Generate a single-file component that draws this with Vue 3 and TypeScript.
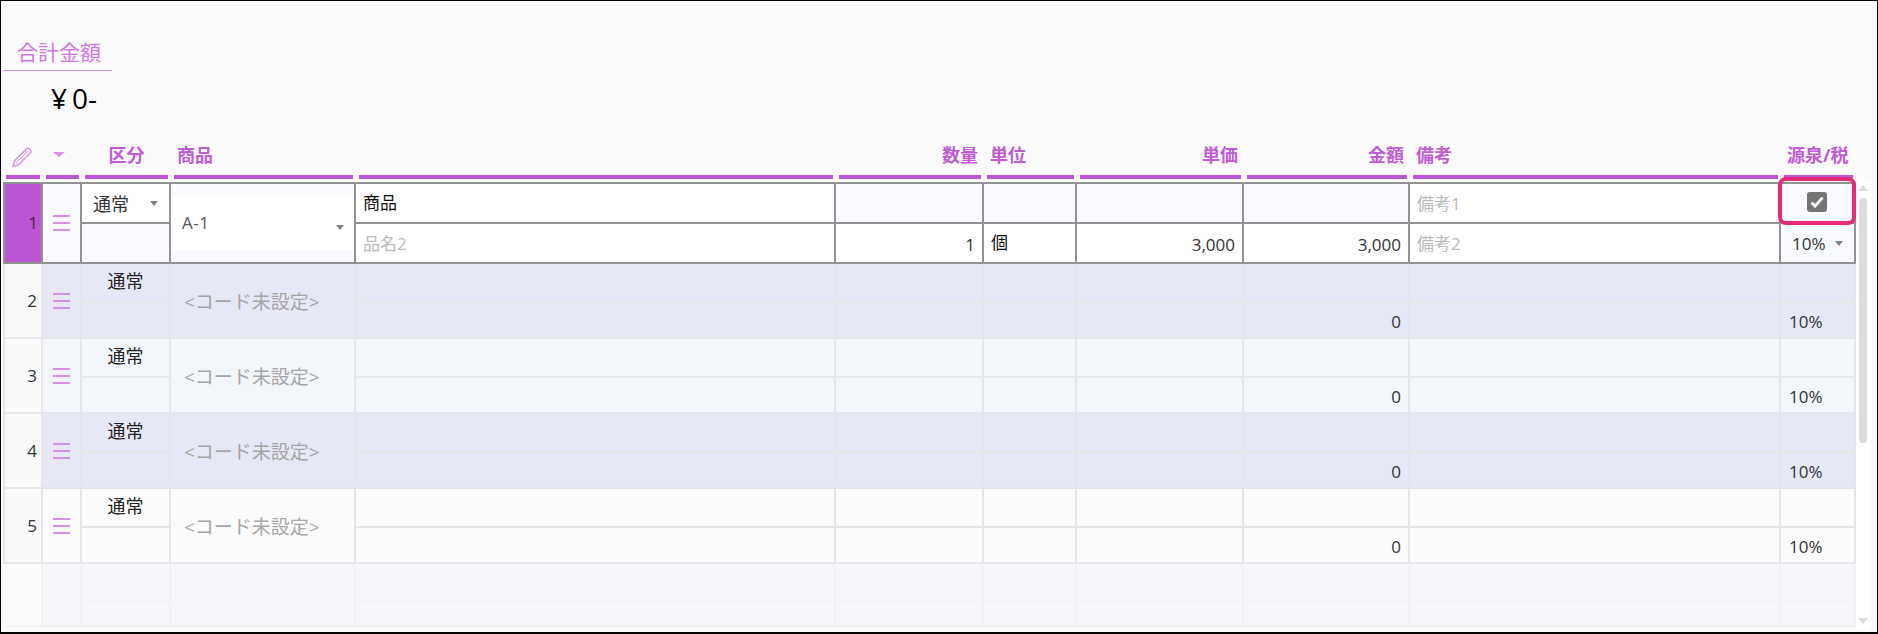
<script setup lang="ts">
const rows: { n: number; tone: string }[] = [
  { n: 2, tone: 'tone-a' },
  { n: 3, tone: 'tone-b' },
  { n: 4, tone: 'tone-a' },
  { n: 5, tone: 'tone-c' },
]
</script>

<template>
  <div class="page">
    <section class="total">
      <div class="total-label">合計金額</div>
      <div class="total-value"><span class="yen">¥</span>0-</div>
    </section>

    <div class="head grid-cols">
      <div class="hc tool">
        <svg class="pencil" viewBox="0 0 22 22" width="22" height="22" fill="none" stroke="#da9ce6" stroke-width="1.5" stroke-linejoin="round">
          <path d="M2 20.5l1.6-6L15.6 2.6a1.6 1.6 0 0 1 2.3 0l1.7 1.7a1.6 1.6 0 0 1 0 2.3L7.6 18.7z" />
          <path d="M3.6 14.5l4 4M13.6 4.6l4 4M5.4 13l9.7-9.7M7.2 14.8l9.7-9.7" stroke-width="1" />
        </svg>
      </div>
      <div class="hc tool"><span class="caret head-caret"></span></div>
      <div class="hc center">区分</div>
      <div class="hc">商品</div>
      <div class="hc"></div>
      <div class="hc right">数量</div>
      <div class="hc">単位</div>
      <div class="hc right">単価</div>
      <div class="hc right">金額</div>
      <div class="hc">備考</div>
      <div class="hc">源泉/税</div>
    </div>

    <div class="body">
      <div class="sheet">
        <div class="row grid-cols first">
          <div class="c num sel-num span">1</div>
          <div class="c handle pale span"><span class="bars"><i></i><i></i><i></i></span></div>
          <div class="c white select">通常<span class="caret"></span></div>
          <div class="c code-sel span"><span>A-1</span><span class="caret"></span></div>
          <div class="c white strong">商品</div>
          <div class="c pale"></div>
          <div class="c pale"></div>
          <div class="c pale"></div>
          <div class="c pale"></div>
          <div class="c white ph">備考1</div>
          <div class="c pale check"><span class="checkbox">
            <svg viewBox="0 0 20 20" width="20" height="20" fill="none" stroke="#fff" stroke-width="2.8"><path d="M4.5 10.5l3.6 3.6L15.5 5.6" /></svg>
          </span></div>

          <div class="c pale"></div>
          <div class="c white ph">品名2</div>
          <div class="c white end">1</div>
          <div class="c white strong">個</div>
          <div class="c white end">3,000</div>
          <div class="c white end">3,000</div>
          <div class="c white ph">備考2</div>
          <div class="c pale tax-sel">10%<span class="caret"></span></div>
        </div>

        <div v-for="r in rows" :key="r.n" class="row grid-cols plain" :class="r.tone">
          <div class="c num span">{{ r.n }}</div>
          <div class="c handle span"><span class="bars"><i></i><i></i><i></i></span></div>
          <div class="c middle">通常</div>
          <div class="c code span">&lt;コード未設定&gt;</div>
          <div class="c"></div>
          <div class="c"></div>
          <div class="c"></div>
          <div class="c"></div>
          <div class="c"></div>
          <div class="c"></div>
          <div class="c"></div>

          <div class="c"></div>
          <div class="c"></div>
          <div class="c"></div>
          <div class="c"></div>
          <div class="c"></div>
          <div class="c end">0</div>
          <div class="c"></div>
          <div class="c tax">10%</div>
        </div>

        <div class="row grid-cols ghost">
          <div class="c num span"></div>
          <div class="c span"></div>
          <div class="c"></div>
          <div class="c span"></div>
          <div class="c"></div><div class="c"></div><div class="c"></div><div class="c"></div><div class="c"></div><div class="c"></div><div class="c"></div>
          <div class="c"></div><div class="c"></div><div class="c"></div><div class="c"></div><div class="c"></div><div class="c"></div><div class="c"></div><div class="c"></div>
        </div>

        <div class="highlight"></div>
      </div>

      <div class="scroll">
        <span class="arrow up"></span>
        <span class="thumb"></span>
        <span class="spacer"></span>
        <span class="arrow down"></span>
      </div>
    </div>
  </div>
</template>

<style>
html, body { margin: 0; background: #fff; }
</style>

<style scoped>
.page {
  box-sizing: border-box;
  width: 1878px;
  height: 634px;
  border: 1px solid #000;
  border-width: 1px 1px 2px 1px;
  background: #fbfbfc;
  padding: 38px 0 0 2px;
  font-family: "Open Sans", "Noto Sans CJK JP", sans-serif;
  font-size: 17px;
  color: #333;
  overflow: hidden;
}

.total { width: 109px; height: 105px; }
.total-label {
  height: 32px;
  box-sizing: border-box;
  border-bottom: 1px solid #d78ce6;
  padding-left: 14px;
  font-size: 21px;
  line-height: 27px;
  color: #cf78e0;
}
.total-value {
  padding: 7px 0 0 48px;
  font-size: 28px;
  line-height: 40px;
  color: #000;
  white-space: nowrap;
}
.yen { margin-right: 5px; }

.grid-cols {
  display: grid;
  grid-template-columns: 40px 39px 89px 185px 480px 148px 93px 167px 166px 371px 75px;
}

.head { height: 38px; }
.hc {
  box-sizing: border-box;
  margin: 0 3px;
  padding: 0 3px;
  border-bottom: 4px solid #bc55d3;
  color: #c05cd6;
  font-size: 18px;
  font-weight: 700;
  line-height: 22px;
  white-space: nowrap;
  height: 35px;
}
.hc.tool { padding: 2px 0 0; display: flex; align-items: flex-start; justify-content: center; }
.hc.center { text-align: center; }
.hc.right { text-align: right; }
.pencil { margin: 0 0 0 -3px; }
.head-caret.caret {
  position: static;
  border-top-color: #d993e6;
  border-width: 5px 6px 0;
  margin: 6px 0 0 -7px;
}

.body { display: flex; height: 446px; }
.sheet { position: relative; width: 1853px; }

.row { grid-template-rows: 39px 36px; }
.row.first { grid-template-rows: 42px 40px; }
.row.ghost { grid-template-rows: 37px 26px; }

.c {
  box-sizing: border-box;
  position: relative;
  border-right: 2px solid #e6e6e8;
  border-bottom: 2px solid #e6e6e8;
  display: flex;
  align-items: center;
  padding: 0 6px;
  font-size: 17px;
  line-height: 22px;
  white-space: nowrap;
  min-width: 0;
}
.c.span { grid-row: span 2; }
.c:first-child { border-left: 2px solid #e6e6e8; }
.c.end { justify-content: flex-end; padding-right: 7px; }
.c.num { justify-content: flex-end; padding-right: 4px; background: #fafafa; }
.handle { justify-content: center; padding: 0; }

.bars { display: flex; flex-direction: column; gap: 5px; width: 17px; }
.bars i { display: block; height: 2px; background: #d88fe8; }

.tone-a .c:not(.num) { background: #e6e8f5; }
.tone-b .c:not(.num) { background: #f2f5f9; }
.tone-c .c:not(.num) { background: #fcfcfc; }
.plain .middle { justify-content: center; font-size: 18px; color: #222; padding: 0 0 3px; }
.plain .code { padding: 2px 0 0 13px; font-size: 19px; color: #a6a6a6; }
.plain .tax { padding: 3px 0 0 8px; }
.plain .end { padding-top: 3px; }

.first .c { border-color: #929292; }
.first .c.pale { background: #f9fbff; }
.first .c.white { background: #fff; }
.first > .c:nth-child(-n+11) { border-top: 2px solid #929292; }
.first > .c:first-child { border-left: 2px solid #929292; }
.first .sel-num { background: #bc55d3; color: #333; padding-right: 3px; }
.first .strong { color: #111; padding-left: 7px; }
.first .ph { color: #bbb; padding: 2px 0 0 7px; }
.first .end { padding-top: 3px; }
.first .select { padding: 2px 0 0 11px; font-size: 18px; color: #333; }
.first .select .caret { right: 11px; top: 17px; }
.code-sel {
  padding-left: 11px;
  color: #555;
  letter-spacing: 0.5px;
  background: linear-gradient(#f9fbff 12px, #fff 12px, #fff calc(100% - 12px), #f9fbff calc(100% - 12px));
}
.code-sel .caret { right: 10px; top: 41px; }
.tax-sel { padding: 2px 0 0 11px; }
.tax-sel .caret { right: 11px; top: 17px; }
.check { justify-content: center; padding: 0 2px 2px 0; }
.checkbox { width: 20px; height: 20px; border-radius: 3px; background: #757575; display: block; }
.checkbox svg { display: block; }

.caret {
  position: absolute;
  width: 0;
  height: 0;
  border-style: solid;
  border-width: 5px 4.5px 0;
  border-color: #808080 transparent transparent;
}

.ghost .c { background: #f5f5fa; border-color: #f1f1f5; border-bottom-width: 1px; border-right-width: 2px; }
.ghost .c.num { background: #fbfbfc; border-left-color: transparent; }
.ghost .c:first-child { border-left: 0; }

.highlight {
  position: absolute;
  box-sizing: border-box;
  left: 1775px;
  top: -5px;
  width: 78px;
  height: 48px;
  border: 4px solid #e62a78;
  border-radius: 8px;
  pointer-events: none;
}

.scroll {
  width: 14px;
  margin-top: -2px;
  height: 450px;
  background: #fff;
  display: flex;
  flex-direction: column;
  align-items: center;
  padding: 5px 0 6px;
  box-sizing: border-box;
}
.thumb { width: 8px; height: 245px; background: #dcdcdc; border-radius: 4px; margin-top: 7px; }
.spacer { flex: 1; }
.arrow { width: 0; height: 0; border-style: solid; }
.arrow.up { border-width: 0 5px 6px; border-color: transparent transparent #dcdcdc; }
.arrow.down { border-width: 6px 5px 0; border-color: #dcdcdc transparent transparent; }
</style>
